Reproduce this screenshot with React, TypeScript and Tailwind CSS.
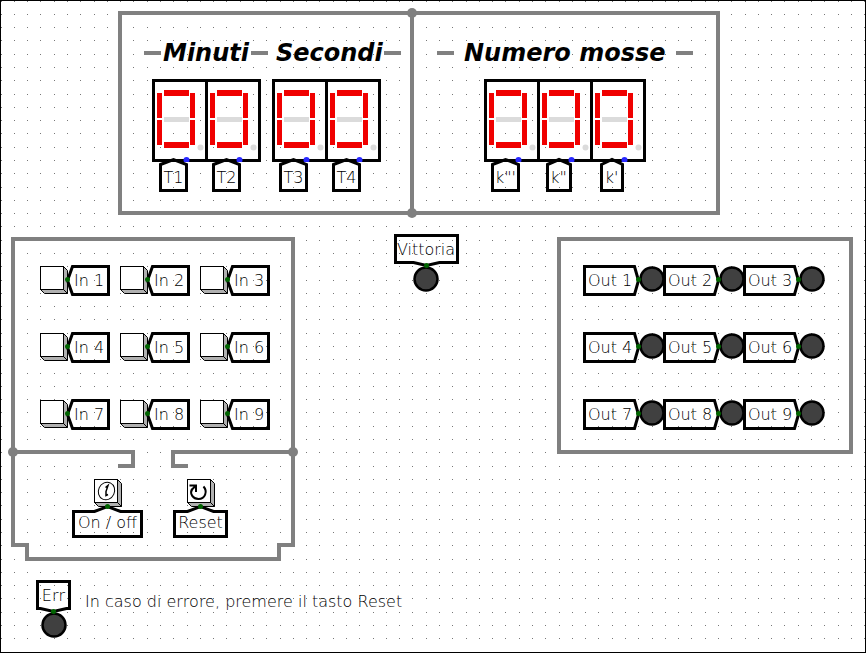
import { useId, type ReactNode } from "react";

type Direction = "up" | "down" | "left" | "right";

const GRID_STEPS = [0, 13, 26, 40, 53, 66, 80];

function DotGrid() {
  return (
    <svg aria-hidden="true" className="absolute inset-0 -z-10 h-full w-full">
      <defs>
        <pattern id="dots" x="13" y="13" width="93" height="93" patternUnits="userSpaceOnUse">
          {GRID_STEPS.map((y) =>
            GRID_STEPS.map((x) => (
              <rect key={`${x}-${y}`} x={x} y={y} width="1" height="1" fill="#777777" />
            )),
          )}
        </pattern>
      </defs>
      <rect width="100%" height="100%" fill="url(#dots)" />
    </svg>
  );
}

function tagShape(dir: Direction, w: number, h: number, nub: number) {
  const e = 1.5;
  const vertical = dir === "up" || dir === "down";
  const mid = (vertical ? w : h) / 2;
  const half = Math.min(13, mid - e);
  const a = mid - half;
  const b = mid + half;
  const r = w - e;
  const l = h - e;
  switch (dir) {
    case "up":
      return { tip: [mid, e], points: [[e, e + nub], [a, e + nub], [mid, e], [b, e + nub], [r, e + nub], [r, l], [e, l]] };
    case "down":
      return { tip: [mid, l], points: [[e, e], [r, e], [r, l - nub], [b, l - nub], [mid, l], [a, l - nub], [e, l - nub]] };
    case "left":
      return { tip: [e, mid - 1], points: [[e + nub, e], [r, e], [r, l], [e + nub, l], [e, mid]] };
    default:
      return { tip: [r, mid - 1], points: [[e, e], [r - nub, e], [r, mid], [r - nub, l], [e, l]] };
  }
}

interface TagProps {
  dir: Direction;
  width: number;
  height: number;
  nub: number;
  pad: string;
  pin?: boolean;
  children: ReactNode;
}

/** Pointed tag that names a pin. */
function Tag({ dir, width, height, nub, pad, pin = true, children }: TagProps) {
  const { tip, points } = tagShape(dir, width, height, nub);
  return (
    <span className="relative z-10 grid shrink-0">
      <svg aria-hidden="true" width={width} height={height} className="overflow-visible [grid-area:1/1]">
        <polygon points={points.map((p) => p.join(",")).join(" ")} fill="none" stroke="#000" strokeWidth="3" />
        {pin && <circle cx={tip[0]} cy={tip[1]} r="2.5" fill="#006400" />}
      </svg>
      <span className={`whitespace-nowrap text-base leading-5 [grid-area:1/1] ${pad}`}>{children}</span>
    </span>
  );
}

function Led({ label }: { label: string }) {
  return (
    <svg role="img" aria-label={`${label}: off`} width="26" height="26" className="shrink-0">
      <circle cx="13" cy="13" r="11.500" fill="#404040" stroke="#000" strokeWidth="2.500" />
    </svg>
  );
}

function PushButton({ id, children }: { id: string; children?: ReactNode }) {
  return (
    <button id={id} type="button" className="block shrink-0 cursor-pointer">
      <svg aria-hidden="true" width="28" height="28">
        <path d="M.5 23.5L4.5 27.5H27.5V4.5L23.5 .5Z" fill="#b0b0b0" stroke="#000" />
        <path d="M23.5 23.5L27.5 27.5" stroke="#000" />
        <rect x=".5" y=".5" width="23" height="23" fill="#fff" stroke="#000" />
        {children}
      </svg>
    </button>
  );
}

function Digit({ name, tagWidth }: { name: string; tagWidth: number }) {
  return (
    <div className="-mr-[3px] flex w-[56px] flex-col">
      <svg role="img" aria-label={`${name}: 0`} width="56" height="83">
        <rect x="1.5" y="1.5" width="53" height="80" fill="none" stroke="#000" strokeWidth="3" />
        <g fill="#f00000">
          <rect x="12" y="11" width="25" height="6" />
          <rect x="12" y="63" width="25" height="6" />
          <rect x="5" y="14" width="5" height="25" />
          <rect x="38" y="14" width="5" height="25" />
          <rect x="5" y="41" width="5" height="25" />
          <rect x="38" y="41" width="5" height="25" />
        </g>
        <rect x="12" y="38" width="25" height="5" fill="#dbdbdb" />
        <circle cx="48.500" cy="68.500" r="3" fill="#dbdbdb" />
        <circle cx="34.500" cy="81" r="3" fill="#2828ff" />
      </svg>
      <div className="-mt-1 flex w-[43px] justify-center">
        <Tag dir="up" width={tagWidth} height={34} nub={5} pad="text-center pt-[10px]" pin={false}>
          {name}
        </Tag>
      </div>
    </div>
  );
}

const Dash = () => <span aria-hidden="true" className="h-1 w-[17px] shrink-0 bg-[#808080]" />;

function Title({ children }: { children: ReactNode }) {
  return <h2 className="whitespace-nowrap text-2xl leading-7 font-bold italic">{children}</h2>;
}

const Junction = ({ place }: { place: string }) => (
  <span aria-hidden="true" className={`absolute size-[10px] rounded-full bg-[#808080] ${place}`} />
);

function InputKey({ n }: { n: number }) {
  const id = useId();
  return (
    <div className="flex items-start">
      <div className="-mr-[2px] pt-px">
        <PushButton id={id} />
      </div>
      <label htmlFor={id}>
        <Tag dir="left" width={44} height={31} nub={5} pad="pl-2 pt-[6px]">
          In {n}
        </Tag>
      </label>
    </div>
  );
}

function OutputLed({ n }: { n: number }) {
  return (
    <div className="flex w-20 items-start">
      <Tag dir="right" width={57} height={31} nub={4} pad="pl-[5px] pt-[6px]">
        Out {n}
      </Tag>
      <div className="-ml-px pt-px">
        <Led label={`Out ${n}`} />
      </div>
    </div>
  );
}

function Command({ label, width, children }: { label: string; width: number; children: ReactNode }) {
  const id = useId();
  return (
    <div className="flex flex-col items-center">
      <PushButton id={id}>{children}</PushButton>
      <label htmlFor={id} className="-mt-[2px]">
        <Tag dir="up" width={width} height={33} nub={5} pad="text-center pt-2">
          {label}
        </Tag>
      </label>
    </div>
  );
}

const NUMBERS = [1, 2, 3, 4, 5, 6, 7, 8, 9];

function Counters() {
  return (
    <section className="mr-[145px] ml-[117px] flex border-4 border-[#808080]">
      <div className="relative flex w-[292px] shrink-0 flex-col border-r-4 border-[#808080] pt-6 pb-[19px]">
        <Junction place="-top-[7px] -right-[7px]" />
        <Junction place="-bottom-[7px] -right-[7px]" />
        <div className="flex items-center pl-[22px]">
          <Dash />
          <div className="w-[90px] pl-[2px]">
            <Title>Minuti</Title>
          </div>
          <Dash />
          <div className="w-[116px] pl-2">
            <Title>Secondi</Title>
          </div>
          <Dash />
        </div>
        <div className="mt-3 flex gap-[14px] pl-[30px]">
          <div className="flex">
            <Digit name="T1" tagWidth={29} />
            <Digit name="T2" tagWidth={29} />
          </div>
          <div className="flex">
            <Digit name="T3" tagWidth={29} />
            <Digit name="T4" tagWidth={29} />
          </div>
        </div>
      </div>
      <div className="flex flex-1 flex-col pt-6 pb-[19px]">
        <div className="flex items-center pl-[23px]">
          <Dash />
          <div className="w-[222px] pl-[10px]">
            <Title>Numero mosse</Title>
          </div>
          <Dash />
        </div>
        <div className="mt-3 flex pl-[70px]">
          <Digit name={`k"'`} tagWidth={29} />
          <Digit name={`k"`} tagWidth={26} />
          <Digit name="k'" tagWidth={24} />
        </div>
      </div>
    </section>
  );
}

function Keypad() {
  return (
    <section className="mt-[3px] w-[284px] shrink-0">
      <div className="border-x-4 border-t-4 border-[#808080] pt-6 pb-5 pl-[25px]">
        <div className="grid grid-cols-[70px_70px_70px] gap-x-[10px] gap-y-9">
          {NUMBERS.map((n) => (
            <InputKey key={n} n={n} />
          ))}
        </div>
      </div>
      <div className="relative border-x-4 border-[#808080] pb-[5px]">
        <Junction place="-top-[3px] -left-[7px]" />
        <Junction place="-top-[3px] -right-[7px]" />
        <div aria-hidden="true" className="flex h-[18px] justify-between">
          <div className="flex w-[120px] items-end justify-end border-t-4 border-r-4 border-[#808080]">
            <span className="h-1 w-[13px] bg-[#808080]" />
          </div>
          <div className="flex w-[120px] items-end border-t-4 border-l-4 border-[#808080]">
            <span className="h-1 w-[13px] bg-[#808080]" />
          </div>
        </div>
        <div className="mt-[11px] flex gap-[30px] pl-[57px]">
          <Command label="On / off" width={71}>
            <ellipse cx="12.500" cy="12" rx="8" ry="9" transform="rotate(25 12.500 12)" fill="none" stroke="#000" />
            <path d="M11.500 8.500L14 6.500L12 12.500V16.500L14 15.500" fill="none" stroke="#000" strokeWidth="1.500" />
          </Command>
          <Command label="Reset" width={55}>
            <path d="M5 10C2.500 15 6 20 11.500 20C18 20 21 12.500 16.500 7.500" fill="none" stroke="#000" strokeWidth="2" />
            <path d="M2.500 6.500H9V13M9 6.500L4.500 11" fill="none" stroke="#000" strokeWidth="2" />
          </Command>
        </div>
      </div>
      <div aria-hidden="true" className="flex h-[18px]">
        <span className="h-1 w-[14px] bg-[#808080]" />
        <span className="flex-1 border-x-4 border-b-4 border-[#808080]" />
        <span className="h-1 w-[14px] bg-[#808080]" />
      </div>
    </section>
  );
}

function Outputs() {
  return (
    <section className="mt-[3px] shrink-0 border-4 border-[#808080] pt-6 pr-[26px] pb-5 pl-[22px]">
      <div className="grid grid-cols-[80px_80px_80px] gap-y-9">
        {NUMBERS.map((n) => (
          <OutputLed key={n} n={n} />
        ))}
      </div>
    </section>
  );
}

function Indicator({ label, width }: { label: string; width: number }) {
  return (
    <div className="flex shrink-0 flex-col items-center">
      <Tag dir="down" width={width} height={33} nub={3} pad="text-center pt-[6px]">
        {label}
      </Tag>
      <div className="-mt-px">
        <Led label={label} />
      </div>
    </div>
  );
}

export default function App() {
  return (
    <main className="relative isolate min-h-screen overflow-hidden border border-black bg-white pt-[10px] font-['DejaVu_Sans',sans-serif] font-extralight text-black">
      <DotGrid />
      <Counters />
      <div className="mt-[19px] flex items-start justify-between pr-3 pl-[10px]">
        <Keypad />
        <Indicator label="Vittoria" width={65} />
        <Outputs />
      </div>
      <div className="mt-[19px] flex items-start gap-[14px] pb-[13px] pl-[35px]">
        <Indicator label="Err" width={35} />
        <p className="pt-3 text-base leading-5">In caso di errore, premere il tasto Reset</p>
      </div>
    </main>
  );
}
